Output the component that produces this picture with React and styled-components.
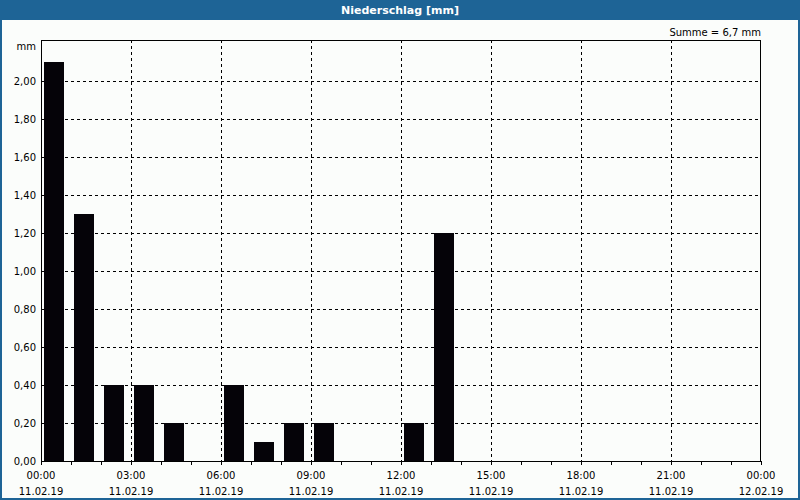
import React from "react";
import styled, { createGlobalStyle } from "styled-components";

const Global = createGlobalStyle`
  body { margin: 0; font-family: "DejaVu Sans", "Liberation Sans", sans-serif; }
`;

const Frame = styled.div`
  width: 800px;
  height: 500px;
  box-sizing: border-box;
  background: #1e6496;
  padding: 0 2px 2px;
  display: flex;
  flex-direction: column;
`;

const Header = styled.div`
  height: 20px;
  color: #fff;
  font-size: 11px;
  font-weight: bold;
  display: flex;
  align-items: center;
  justify-content: center;
`;

const Panel = styled.div`
  flex: 1;
  background: #fbfdfb;
  display: flex;
`;

const data = [2.1, 1.3, 0.4, 0.4, 0.2, 0, 0.4, 0.1, 0.2, 0.2, 0, 0, 0.2, 1.2];
const X0 = 41, X1 = 761, Y0 = 461, TOP = 40;
const yOf = (v) => Y0 - v * 190;

function Chart() {
  const hLines = [];
  for (let i = 1; i <= 10; i++) hLines.push(i * 0.2);
  const vLines = [1, 2, 3, 4, 5, 6, 7];
  const labels = [0, 1, 2, 3, 4, 5, 6, 7, 8];
  const fs = { fontSize: 11, fontFamily: "DejaVu Sans, Liberation Sans, sans-serif", fill: "#000" };
  return (
    <svg width="796" height="478" viewBox="2 20 796 478" shapeRendering="crispEdges">
      <text x="761" y="36" textAnchor="end" {...fs} fontSize="10">Summe = 6,7 mm</text>
      <text x="36" y="50" textAnchor="end" {...fs} fontSize="10">mm</text>
      {hLines.map((v) => (
        <line key={v} x1={X0} x2={X1} y1={yOf(v) + 0.5} y2={yOf(v) + 0.5} stroke="#000" strokeDasharray="3 3" />
      ))}
      {vLines.map((i) => (
        <line key={i} x1={X0 + i * 90 + 0.5} x2={X0 + i * 90 + 0.5} y1={TOP} y2={Y0} stroke="#000" strokeDasharray="3 3" />
      ))}
      {[0, ...hLines].map((v) => (
        <text key={v} x="36" y={yOf(v) + 4} textAnchor="end" {...fs} fontSize="10">
          {v.toFixed(2).replace(".", ",")}
        </text>
      ))}
      {data.map((v, i) =>
        v > 0 ? (
          <rect key={i} x={X0 + i * 30 + 3} y={yOf(v)} width="20" height={Y0 - yOf(v)} fill="#050308" />
        ) : null
      )}
      <rect x={X0 + 0.5} y={TOP + 0.5} width={X1 - X0 - 1} height={Y0 - TOP} fill="none" stroke="#000" />
      {Array.from({ length: 25 }, (_, i) => (
        <line key={i} x1={X0 + i * 30 + 0.5} x2={X0 + i * 30 + 0.5} y1={Y0} y2={Y0 + 4} stroke="#000" />
      ))}
      {labels.map((i) => (
        <g key={i}>
          <text x={X0 + i * 90} y="479" textAnchor="middle" {...fs} fontSize="10">
            {String((i * 3) % 24).padStart(2, "0")}:00
          </text>
          <text x={X0 + i * 90} y="495" textAnchor="middle" {...fs} fontSize="10">
            {i === 8 ? "12.02.19" : "11.02.19"}
          </text>
        </g>
      ))}
    </svg>
  );
}

export default function App() {
  return (
    <>
      <Global />
      <Frame>
        <Header>Niederschlag [mm]</Header>
        <Panel>
          <Chart />
        </Panel>
      </Frame>
    </>
  );
}
